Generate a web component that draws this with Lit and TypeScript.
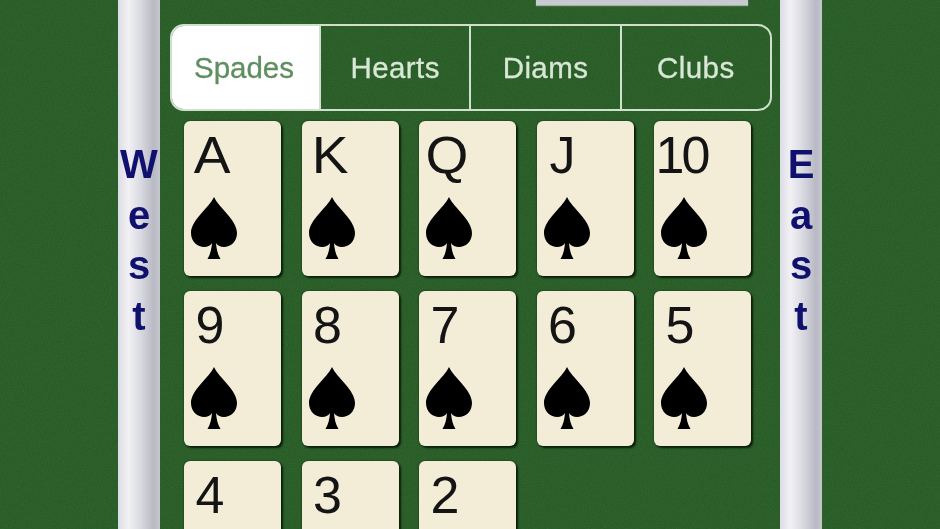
import { LitElement, html, css } from "lit";
import { customElement } from "lit/decorators.js";
import { classMap } from "lit/directives/class-map.js";

const RANKS = ["A", "K", "Q", "J", "10", "9", "8", "7", "6", "5", "4", "3", "2"];
const TABS = ["Spades", "Hearts", "Diams", "Clubs"];

@customElement("app-root")
export class AppRoot extends LitElement {
  static styles = css`
    :host {
      display: block;
      width: 940px;
      height: 529px;
      overflow: hidden;
      font-family: "Liberation Sans", Arial, sans-serif;
    }
    .table {
      position: relative;
      display: flex;
      width: 940px;
      height: 529px;
      padding: 0 118px;
      box-sizing: border-box;
      overflow: hidden;
      background: #245a22;
      filter: blur(0.6px);
    }
    .felt {
      position: absolute;
      inset: 0;
      width: 100%;
      height: 100%;
      opacity: 0.1;
      pointer-events: none;
    }
    .rail {
      position: relative;
      flex: 0 0 42px;
      display: flex;
      flex-direction: column;
      align-items: center;
      padding-top: 139px;
      box-sizing: border-box;
      background: linear-gradient(90deg, #dcdce4 0%, #f1f1f5 25%, #d8d8e0 55%, #b9b9c4 85%, #c6c6ce 100%);
    }
    .rail span {
      font-size: 40px;
      font-weight: 700;
      line-height: 50.5px;
      color: #10106e;
    }
    .main {
      position: relative;
      flex: 1;
      display: flex;
      flex-direction: column;
      min-width: 0;
    }
    .topbar {
      flex: none;
      align-self: flex-end;
      width: 212px;
      height: 5px;
      margin-right: 32px;
      background: #c9c9d1;
      box-shadow: 0 1px 1px #9fb09f;
    }
    .tabs {
      flex: none;
      display: flex;
      height: 87px;
      margin: 19px 8px 0 10px;
      box-sizing: border-box;
      border: 2px solid #cfe0cc;
      border-radius: 14px;
      overflow: hidden;
    }
    .tab {
      flex: 1;
      display: flex;
      align-items: center;
      justify-content: center;
      padding-top: 1px;
      font-size: 29.5px;
      letter-spacing: 0.4px;
      -webkit-text-stroke: 0.3px currentColor;
      color: #d9e7d6;
      border-left: 2px solid #cfe0cc;
    }
    .tab:first-child {
      flex: 0 0 147px;
      border-left: 0;
      background: #fff;
      color: #5f8f60;
      letter-spacing: 0;
      padding-right: 3px;
      box-sizing: border-box;
    }
    .cards {
      flex: none;
      display: grid;
      grid-template-columns: repeat(5, 97px);
      grid-auto-rows: 155px;
      column-gap: 20.5px;
      row-gap: 15px;
      margin: 10px 0 0 24px;
    }
    .card {
      display: flex;
      flex-direction: column;
      box-sizing: border-box;
      padding-top: 5px;
      background: #f3edd8;
      border-radius: 6px;
      box-shadow: 2px 2px 2px #0a1f0a, 0 0 2px #0c2a0c;
    }
    .rank {
      width: 51px;
      text-align: center;
      font-size: 52px;
      line-height: 58px;
      letter-spacing: -1px;
      color: #141414;
    }
    .rank.face {
      width: 55px;
      transform: scaleX(1.06);
    }
    .rank.ten {
      width: 55px;
      letter-spacing: -3px;
    }
    .card svg {
      width: 46px;
      height: 62px;
      margin: 13px 0 0 7px;
      fill: #000;
    }
  `;

  render() {
    return html`
      <div class="table">
        <svg class="felt" aria-hidden="true">
          <filter id="grain">
            <feTurbulence type="fractalNoise" baseFrequency="0.7" numOctaves="2" seed="4"></feTurbulence>
            <feColorMatrix type="saturate" values="0"></feColorMatrix>
          </filter>
          <rect width="100%" height="100%" filter="url(#grain)"></rect>
        </svg>
        <div class="rail">${[..."West"].map((c) => html`<span>${c}</span>`)}</div>
        <div class="main">
          <div class="topbar"></div>
          <div class="tabs">${TABS.map((t) => html`<div class="tab">${t}</div>`)}</div>
          <div class="cards">
            ${RANKS.map(
              (r) => html`<div class="card">
                <div class=${classMap({ rank: true, face: "AKQ".includes(r), ten: r === "10" })}>${r}</div>
                <svg viewBox="0 0 46 62">
                  <path d="M23 0C28 11 46 23 46 36C46 45 39 50 33 50C29 50 26 48 25 46C25.5 52 26.5 57 29.5 62L16.5 62C19.5 57 20.5 52 21 46C20 48 17 50 13 50C7 50 0 45 0 36C0 23 18 11 23 0Z"></path>
                </svg>
              </div>`
            )}
          </div>
        </div>
        <div class="rail">${[..."East"].map((c) => html`<span>${c}</span>`)}</div>
      </div>
    `;
  }
}
